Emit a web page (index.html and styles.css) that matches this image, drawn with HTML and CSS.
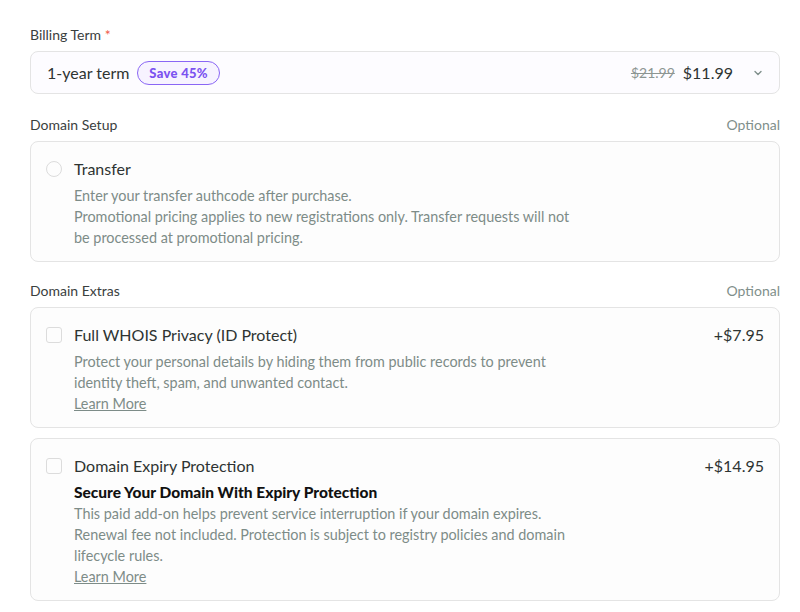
FILE: index.html
```html
<!DOCTYPE html>
<html lang="en">
<head>
<meta charset="UTF-8">
<title>Domain Options</title>
<link rel="stylesheet" href="styles.css">
</head>
<body>
  <div class="config">
    <div class="field-head">
      <span class="field-label">Billing Term <span class="req">*</span></span>
    </div>
    <div class="select-box">
      <div class="term">
        <span>1-year term</span>
        <span class="badge">Save 45%</span>
      </div>
      <div class="price">
        <span class="old">$21.99</span>
        <span class="now">$11.99</span>
        <svg class="chevron" width="10" height="10" viewBox="0 0 10 10"><path d="M2 3.5 L5 6.5 L8 3.5" fill="none" stroke="#7f8f8b" stroke-width="1.4" stroke-linecap="round" stroke-linejoin="round"/></svg>
      </div>
    </div>

    <div class="field-head">
      <span class="field-label">Domain Setup</span>
      <span class="optional">Optional</span>
    </div>
    <div class="card card-setup">
      <div class="card-row">
        <span class="radio"></span>
        <div class="card-body">
          <div class="card-title">Transfer</div>
          <p class="desc">Enter your transfer authcode after purchase.<br>
            Promotional pricing applies to new registrations only. Transfer requests will not be processed at promotional pricing.</p>
        </div>
      </div>
    </div>

    <div class="field-head">
      <span class="field-label">Domain Extras</span>
      <span class="optional">Optional</span>
    </div>
    <div class="card">
      <div class="card-row">
        <span class="check"></span>
        <div class="card-body">
          <div class="card-title">Full WHOIS Privacy (ID Protect)</div>
          <p class="desc">Protect your personal details by hiding them from public records to prevent identity theft, spam, and unwanted contact.<br>
            <a href="#">Learn More</a></p>
        </div>
        <span class="addon-price">+$7.95</span>
      </div>
    </div>
    <div class="card">
      <div class="card-row">
        <span class="check"></span>
        <div class="card-body">
          <div class="card-title">Domain Expiry Protection</div>
          <h4>Secure Your Domain With Expiry Protection</h4>
          <p class="desc">This paid add-on helps prevent service interruption if your domain expires.<br>
            Renewal fee not included. Protection is subject to registry policies and domain lifecycle rules.<br>
            <a href="#">Learn More</a></p>
        </div>
        <span class="addon-price">+$14.95</span>
      </div>
    </div>
  </div>
</body>
</html>
```

FILE: styles.css
```css
body {
  margin: 0;
  background: #fff;
  font-family: Lato, "Open Sans", sans-serif;
  color: #2e3432;
}
.config {
  width: 750px;
  padding: 23px 0 0 30px;
}
.field-head {
  display: flex;
  justify-content: space-between;
  align-items: center;
  font-size: 14px;
  height: 22px;
  margin-bottom: 6px;
}
.field-label {
  color: #3a403e;
}
.req {
  color: #ef5a4a;
}
.optional {
  color: #7f8f8b;
}
.select-box {
  display: flex;
  justify-content: space-between;
  align-items: center;
  height: 41px;
  border: 1px solid #e4e4e4;
  border-radius: 8px;
  background: #fdfcff;
  padding: 0 16px;
  margin-bottom: 19px;
}
.term {
  display: flex;
  align-items: center;
  gap: 8px;
  font-size: 16px;
}
.badge {
  font-size: 13px;
  font-weight: 900;
  color: #7b52f0;
  border: 1.5px solid #8a66f5;
  background: #f7f3ff;
  border-radius: 12px;
  padding: 3px 11px;
  line-height: 16px;
  letter-spacing: 0.3px;
}
.price {
  display: flex;
  align-items: center;
  gap: 8px;
}
.old {
  font-size: 14px;
  color: #8d9693;
  text-decoration: line-through;
}
.now {
  font-size: 16px;
}
.chevron {
  margin-left: 12px;
}
.card {
  border: 1px solid #e4e4e4;
  border-radius: 8px;
  background: #fdfdfd;
  padding: 16px 15px 13px 15px;
  margin-bottom: 10px;
}
.card-setup {
  margin-bottom: 17px;
}
.card-row {
  display: flex;
  align-items: flex-start;
  gap: 12px;
}
.card-body {
  flex: 1;
}
.radio {
  width: 14px;
  height: 14px;
  border: 1px solid #dcdcdc;
  border-radius: 50%;
  margin-top: 3px;
  flex-shrink: 0;
}
.check {
  width: 14px;
  height: 14px;
  border: 1px solid #dcdcdc;
  border-radius: 3px;
  margin-top: 3px;
  flex-shrink: 0;
}
.card-title {
  font-size: 16px;
  line-height: 22px;
  color: #2e3432;
  margin-bottom: 5px;
}
.addon-price {
  font-size: 16px;
  line-height: 22px;
}
h4 {
  margin: 0;
  font-size: 15.5px;
  line-height: 21px;
  font-weight: 900;
  color: #111;
}
.desc {
  margin: 0;
  font-size: 14.4px;
  line-height: 21px;
  color: #7d8c88;
  max-width: 500px;
}
.desc a {
  color: #7d8c88;
}
```
